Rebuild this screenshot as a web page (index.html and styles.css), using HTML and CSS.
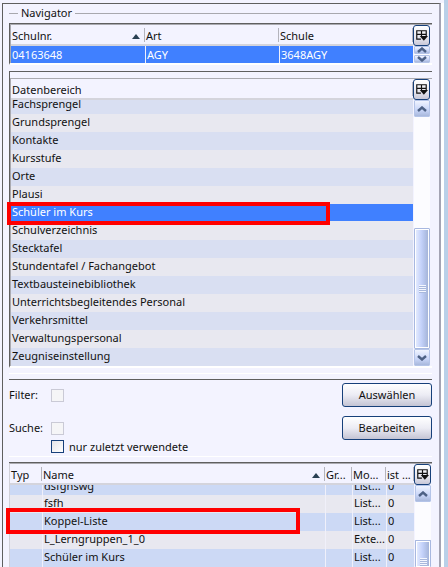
FILE: index.html
```html
<!DOCTYPE html>
<html lang="de">
<head>
    <meta charset="UTF-8">
    <meta name="viewport" content="width=device-width, initial-scale=1.0">
    <title>Navigator</title>
    <link rel="stylesheet" href="styles.css">
</head>
<body>
    <!-- shared icons -->
    <svg class="sprite" aria-hidden="true">
        <symbol id="icon-columns" viewBox="0 0 11 11">
            <path d="M1 1.5H10M1.5 1V8.5H5M9.5 1V6M1 4.5H10M5.5 1V6" fill="none" stroke="#111" stroke-width="1"/>
            <path d="M4 6H11L7.5 10Z" fill="#111"/>
        </symbol>
        <symbol id="icon-up" viewBox="0 0 10 6">
            <path d="M1 5L5 1.5L9 5" fill="none" stroke="#4d6185" stroke-width="2.4"/>
        </symbol>
        <symbol id="icon-down" viewBox="0 0 10 6">
            <path d="M1 1L5 4.5L9 1" fill="none" stroke="#4d6185" stroke-width="2.4"/>
        </symbol>
    </svg>

    <main class="window">
        <h1 class="legend">Navigator</h1>

        <section class="pane pane-school">
            <table class="grid">
                <thead>
                    <tr>
                        <th class="sorted">Schulnr.</th>
                        <th>Art</th>
                        <th>Schule</th>
                    </tr>
                </thead>
                <tbody>
                    <tr class="selected">
                        <td>04163648</td>
                        <td>AGY</td>
                        <td>3648AGY</td>
                    </tr>
                </tbody>
            </table>
            <div class="side">
                <button class="columns" aria-label="Spalten"><svg><use href="#icon-columns"/></svg></button>
                <div class="scrollbar">
                    <button class="arrow" aria-label="Nach oben"><svg><use href="#icon-up"/></svg></button>
                    <button class="arrow" aria-label="Nach unten"><svg><use href="#icon-down"/></svg></button>
                </div>
            </div>
        </section>

        <section class="pane pane-area">
            <table class="grid">
                <thead>
                    <tr><th>Datenbereich</th></tr>
                </thead>
                <tbody>
                    <tr class="cut"><td>Fachsprengel</td></tr>
                    <tr><td>Grundsprengel</td></tr>
                    <tr><td>Kontakte</td></tr>
                    <tr><td>Kursstufe</td></tr>
                    <tr><td>Orte</td></tr>
                    <tr><td>Plausi</td></tr>
                    <tr class="selected"><td class="marked">Schüler im Kurs<i class="mark"></i></td></tr>
                    <tr><td>Schulverzeichnis</td></tr>
                    <tr><td>Stecktafel</td></tr>
                    <tr><td>Stundentafel / Fachangebot</td></tr>
                    <tr><td>Textbausteinebibliothek</td></tr>
                    <tr><td>Unterrichtsbegleitendes Personal</td></tr>
                    <tr><td>Verkehrsmittel</td></tr>
                    <tr><td>Verwaltungspersonal</td></tr>
                    <tr><td>Zeugniseinstellung</td></tr>
                </tbody>
            </table>
            <div class="side">
                <button class="columns" aria-label="Spalten"><svg><use href="#icon-columns"/></svg></button>
                <div class="scrollbar">
                    <button class="arrow" aria-label="Nach oben"><svg><use href="#icon-up"/></svg></button>
                    <div class="track"><div class="thumb"></div></div>
                    <button class="arrow" aria-label="Nach unten"><svg><use href="#icon-down"/></svg></button>
                </div>
            </div>
        </section>

        <form class="filters">
            <div class="filter-row">
                <label for="filter">Filter:</label>
                <input type="checkbox" id="filter" disabled>
                <button type="button" class="action">Auswählen</button>
            </div>
            <div class="filter-row">
                <label for="suche">Suche:</label>
                <input type="checkbox" id="suche" disabled>
                <button type="button" class="action">Bearbeiten</button>
            </div>
            <div class="recent">
                <input type="checkbox" id="recent">
                <label for="recent">nur zuletzt verwendete</label>
            </div>
        </form>

        <section class="pane pane-list">
            <table class="grid">
                <colgroup>
                    <col class="col-type">
                    <col>
                    <col class="col-size">
                    <col class="col-module">
                    <col class="col-count">
                </colgroup>
                <thead>
                    <tr>
                        <th>Typ</th>
                        <th class="sorted">Name</th>
                        <th>Gr...</th>
                        <th>Mo...</th>
                        <th>ist ...</th>
                    </tr>
                </thead>
                <tbody>
                    <tr class="cut"><td></td><td><span>dsfghswg</span></td><td></td><td><span>List...</span></td><td><span>0</span></td></tr>
                    <tr><td></td><td>fsfh</td><td></td><td>List...</td><td>0</td></tr>
                    <tr><td class="marked"><i class="mark"></i></td><td>Koppel-Liste</td><td></td><td>List...</td><td>0</td></tr>
                    <tr><td></td><td>L_Lerngruppen_1_0</td><td></td><td>Exte...</td><td>0</td></tr>
                    <tr><td></td><td>Schüler im Kurs</td><td></td><td>List...</td><td>0</td></tr>
                </tbody>
            </table>
            <div class="side">
                <button class="columns" aria-label="Spalten"><svg><use href="#icon-columns"/></svg></button>
                <div class="scrollbar">
                    <button class="arrow" aria-label="Nach oben"><svg><use href="#icon-up"/></svg></button>
                    <div class="track"><div class="thumb"></div></div>
                </div>
            </div>
        </section>
    </main>
</body>
</html>
```
FILE: styles.css
```css
* {
    box-sizing: border-box;
}
body {
    margin: 0;
    height: 100vh;
    overflow: hidden;
    padding: 3px 4px 0 2px;
    background: linear-gradient(to left, #bad0e8 4px, #f3f3ff 4px);
    color: #111;
    font: 11px/18px "Noto Sans", "Open Sans", sans-serif;
}
.sprite {
    display: none;
}
.window {
    height: 100%;
    display: flex;
    flex-direction: column;
    margin-right: 3px;
    padding: 0 7px 0 6px;
    border-top: 1px solid #5f5f5f;
    border-left: 1px solid #5f5f5f;
    border-right: 2px solid #a4a4b4;
    background: #f3f3ff;
    box-shadow: 3px 0 #fff;
}

/* Group title with a line on both sides */
.legend {
    display: flex;
    align-items: center;
    gap: 3px;
    height: 18px;
    margin: 0 0 1px;
    font-size: 11px;
    font-weight: normal;
    line-height: 16px;
}
.legend::before,
.legend::after {
    content: '';
    width: 9px;
    height: 1px;
    background: #a8a8ae;
}
.legend::after {
    flex: 1;
}

/* Tables */
.pane {
    display: flex;
    border-top: 1px solid #5f5f5f;
    background: #f3f3ff;
}
.pane-school,
.pane-area {
    border-left: 1px solid #5f5f5f;
    border-bottom: 2px solid #fff;
}
.pane-school {
    margin-bottom: 6px;
}
.pane-area {
    padding-top: 6px;
}
.grid {
    flex: 1;
    width: 0;
    table-layout: fixed;
    border-collapse: separate;
    border-spacing: 0;
    border-top: 1px solid #aaaab0;
    border-left: 1px solid #aaaab0;
}
.grid th {
    position: relative;
    height: 21px;
    padding: 2px 0 0 1px;
    border-bottom: 2px solid #d4d4dc;
    font-weight: normal;
    text-align: left;
    line-height: 17px;
    white-space: nowrap;
}
.grid th:not(:last-child)::before,
.pane-school th:last-child::before,
.pane-area th::before,
.pane-list th:last-child::before {
    content: '';
    position: absolute;
    top: 3px;
    bottom: 2px;
    right: 0;
    width: 1px;
    background: #b4b4bc;
}
.grid th.sorted::after {
    content: '';
    position: absolute;
    top: 9px;
    right: 5px;
    border: 4px solid transparent;
    border-top: 0;
    border-bottom: 5px solid #294052;
}
.grid td {
    height: 18px;
    padding: 0 0 0 1px;
    line-height: 16px;
    vertical-align: top;
    white-space: nowrap;
    background: #e8e8f0;
}
.grid td + td {
    border-left: 1px solid #f0f0fa;
}
.grid tr:nth-child(odd) td {
    background: #d9dff2;
}
.grid tr.selected td {
    background: #4080ff;
    color: #fff;
}
.pane-area tr.selected td {
    border-bottom: 1px solid #e8e8f0;
}
.pane-school tr.selected td {
    height: 17px;
    line-height: 17px;
}
.pane-area tr.cut td {
    height: 14px;
    line-height: 8px;
}
.pane-list tr.cut td {
    height: 10px;
}
.cut span {
    display: flex;
    align-items: flex-end;
    height: 10px;
    padding-bottom: 1px;
    overflow: hidden;
}
.pane-list tr:nth-child(odd) td {
    background: #ccd9f5;
}
.marked {
    position: relative;
}
.mark {
    position: absolute;
    z-index: 1;
    border: 4px solid #f00;
}
.pane-area .mark {
    top: -2px;
    left: -4px;
    width: 323px;
    height: 23px;
}
.pane-list .mark {
    top: -5px;
    left: -4px;
    width: 294px;
    height: 26px;
}

/* Column chooser and scrollbar */
.side {
    display: flex;
    flex-direction: column;
    width: 19px;
    padding-right: 2px;
    border-top: 1px solid #aaaab0;
}
.columns {
    display: grid;
    place-items: center;
    width: 17px;
    height: 21px;
    padding: 0;
    border: 1px solid #17407a;
    border-radius: 3px;
    background: linear-gradient(#fff, #e8e8f0 60%, #c8c8d8);
}
.columns svg {
    width: 13px;
    height: 13px;
}
.scrollbar {
    flex: 1;
    display: flex;
    flex-direction: column;
    margin-left: 1px;
    background: #fcfcff;
}
.arrow {
    display: grid;
    place-items: center;
    height: 17px;
    padding: 0;
    border: 1px solid #b4c4e8;
    border-radius: 1px;
    background: linear-gradient(#f0f4ff, #c8d5f8 60%, #a8b8dc);
}
.arrow svg {
    width: 10px;
    height: 6px;
}
.pane-school .scrollbar {
    gap: 1px;
}
.pane-school .arrow {
    flex: 1;
    height: 8px;
}
.track {
    flex: 1;
    display: flex;
    flex-direction: column;
    justify-content: flex-end;
}
.thumb {
    height: 52%;
    border: 1px solid #a8b8e0;
    border-radius: 1px;
    box-shadow: inset 0 0 0 1px #fff;
    background:
        repeating-linear-gradient(#f4f7ff 0 1px, #a8b8dc 1px 2px) center / 7px 8px no-repeat,
        linear-gradient(to right, #e8eeff, #c4d2fa 45%, #a0b0d4);
}
.pane-list .thumb {
    height: 27px;
    border-bottom: 0;
    background-position: center 17px, 0 0;
}

/* Filter and search */
.filters {
    margin-top: 5px;
    border-top: 1px solid #fff;
    border-bottom: 1px solid #fff;
    padding-bottom: 1px;
}
.filters::before {
    content: '';
    display: block;
    height: 1px;
    margin: 5px 0 3px;
    background: #5f5f5f;
}
.filter-row {
    display: flex;
    align-items: center;
    height: 24px;
    margin-bottom: 9px;
}
.filter-row label {
    width: 42px;
}
.filters input {
    appearance: none;
    width: 13px;
    height: 13px;
    margin: 0;
    border: 1px solid #17407a;
    background: linear-gradient(135deg, #e4e4e8, #fff);
}
.filters input:disabled {
    border-color: #cacad6;
    background: #f5f5f7;
}
.action {
    width: 90px;
    height: 24px;
    margin-left: auto;
    padding: 0;
    border: 1px solid #17407a;
    border-radius: 3px;
    background: linear-gradient(#fff, #ececf4 50%, #c4c4d4);
    color: #111;
    font: inherit;
}
.recent {
    display: flex;
    align-items: center;
    gap: 5px;
    height: 13px;
    margin: -9px 0 2px 42px;
}

/* Report list runs down to the window edge */
.pane-list {
    flex: 1;
    margin-top: 5px;
}
.pane-list .grid {
    align-self: flex-start;
    border-left-color: #d0d0d8;
}
.pane-list .side {
    width: 18px;
    padding-right: 1px;
}
.col-type {
    width: 32px;
}
.col-size {
    width: 27px;
}
.col-module {
    width: 34px;
}
.col-count {
    width: 28px;
}
```
